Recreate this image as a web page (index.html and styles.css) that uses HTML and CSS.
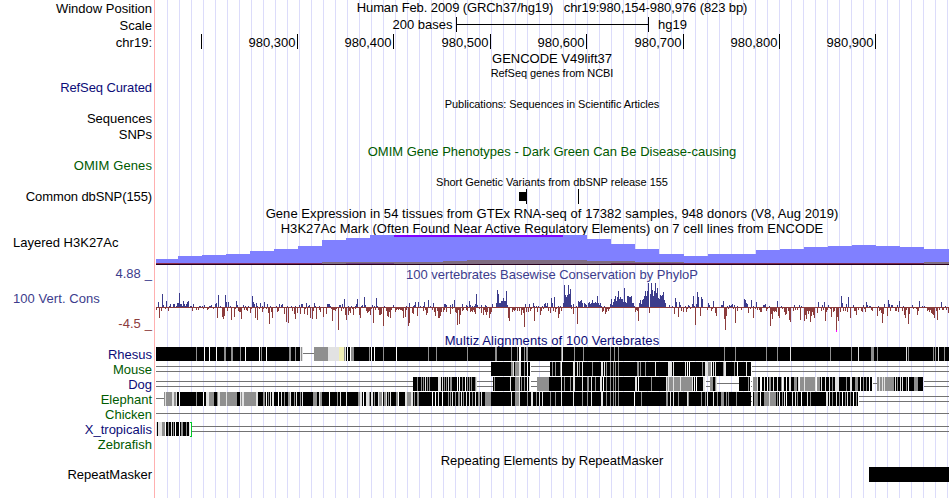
FILE: index.html
```html
<!DOCTYPE html>
<html lang="en">
<head>
<meta charset="utf-8">
<title>chr19:980,154-980,976</title>
<link rel="stylesheet" href="styles.css">
</head>
<body>
<main class="browser">
  <div class="row h17"><div class="label drop">Window Position</div><div class="title tight">Human Feb. 2009 (GRCh37/hg19) &nbsp; chr19:980,154-980,976 (823 bp)</div></div>
  <div class="row h17"><div class="label drop">Scale</div><svg class="track" id="scale" viewBox="155 17 794 17" width="794" height="17"></svg></div>
  <div class="row h17"><div class="label drop">chr19:</div><svg class="track" id="ruler" viewBox="155 34 794 17" width="794" height="17"></svg></div>
  <div class="row h15"><div class="title">GENCODE V49lift37</div></div>
  <div class="row h14"><div class="title small">RefSeq genes from NCBI</div></div>
  <div class="row h17"><div class="label navy tight">RefSeq Curated</div></div>
  <div class="row h14"><div class="title small">Publications: Sequences in Scientific Articles</div></div>
  <div class="row h16"><div class="label">Sequences</div></div>
  <div class="row h17"><div class="label">SNPs</div></div>
  <div class="row h14"><div class="title green">OMIM Gene Phenotypes - Dark Green Can Be Disease-causing</div></div>
  <div class="row h17"><div class="label green loose">OMIM Genes</div></div>
  <div class="row h14"><div class="title small snug">Short Genetic Variants from dbSNP release 155</div></div>
  <div class="row h17"><div class="label tight">Common dbSNP(155)</div><svg class="track" id="snp" viewBox="155 189 794 17" width="794" height="17"></svg></div>
  <div class="row h15"><div class="title wide">Gene Expression in 54 tissues from GTEx RNA-seq of 17382 samples, 948 donors (V8, Aug 2019)</div></div>
  <div class="row h14"><div class="title wide">H3K27Ac Mark (Often Found Near Active Regulatory Elements) on 7 cell lines from ENCODE</div></div>
  <div class="row h31"><div class="label left">Layered H3K27Ac</div><svg class="track" id="histone" viewBox="155 235 794 31" width="794" height="31"></svg></div>
  <div class="row h67">
    <div class="axis">
      <div class="limit blue"><span>4.88</span><span>_</span></div>
      <div class="label left blue wide">100 Vert. Cons</div>
      <div class="limit brown"><span>-4.5</span><span>_</span></div>
    </div>
    <div class="plot">
      <div class="title blue">100 vertebrates Basewise Conservation by PhyloP</div>
      <svg class="track" id="cons" viewBox="155 282 794 51" width="794" height="51"></svg>
    </div>
  </div>
  <div class="row h14"><div class="title navy loose">Multiz Alignments of 100 Vertebrates</div></div>
  <div class="alignments">
    <div class="species">
      <div class="label navy">Rhesus</div>
      <div class="label green">Mouse</div>
      <div class="label navy">Dog</div>
      <div class="label green">Elephant</div>
      <div class="label green">Chicken</div>
      <div class="label navy">X_tropicalis</div>
      <div class="label green">Zebrafish</div>
    </div>
    <svg class="track" id="multiz" viewBox="155 347 794 106" width="794" height="106"></svg>
  </div>
  <div class="row h14"><div class="title">Repeating Elements by RepeatMasker</div></div>
  <div class="row h31"><div class="label">RepeatMasker</div><svg class="track" id="repeats" viewBox="155 467 794 31" width="794" height="31"></svg></div>
</main>
<script src="tracks.js"></script>
</body>
</html>
```
FILE: styles.css
```css
* { box-sizing: border-box; }
body {
  margin: 0;
  background: #fff;
  color: #000;
  font: 13px/15px "Liberation Sans", Arial, sans-serif;
  overflow: hidden;
}
.browser {
  width: 949px;
  height: 498px;
  background:
    linear-gradient(#ffb0b0, #ffb0b0) 154px 0 / 1px 100% no-repeat,
    repeating-linear-gradient(to right, #dcdcfa 0 1px, transparent 1px 12px) 167px 0 / 782px 100% no-repeat;
}
.row, .alignments {
  display: grid;
  grid-template-columns: 155px 794px;
  white-space: nowrap;
}
.h14 { height: 14px; }
.h15 { height: 15px; }
.h16 { height: 16px; }
.h17 { height: 17px; }
.h31 { height: 31px; }
.h67 { height: 67px; }
.alignments { height: 106px; }
.label { grid-column: 1; padding-right: 3px; text-align: right; }
.label.drop { padding-top: 1px; }
.label.left { padding-left: 13px; text-align: left; }
.title { grid-column: 2; text-align: center; }
.small { font-size: 11px; line-height: 14px; letter-spacing: -0.07px; }
.snug { letter-spacing: -0.03px; }
.tight { letter-spacing: -0.1px; }
.wide { letter-spacing: 0.06px; }
.loose { letter-spacing: 0.1px; }
.track { grid-column: 2; display: block; shape-rendering: crispEdges; }
.axis { display: flex; flex-direction: column; gap: 10px; }
.limit { display: flex; justify-content: flex-end; gap: 4px; padding-right: 3px; }
.plot { padding-top: 1px; }
.axis, .species { grid-column: 1; }
.navy { color: #0c0c78; }
.green { color: #005a00; }
.blue { color: #3c3c8c; }
.brown { color: #8c3c3c; }
text { font: 13px "Liberation Sans", Arial, sans-serif; }
```
FILE: tracks.js
```js
const NS = 'http://www.w3.org/2000/svg';
const BLACK = '#000', LINE = '#737373';

function rect(id, x, y, w, h, fill) {
  const r = document.createElementNS(NS, 'rect');
  Object.entries({ x, y, width: w, height: h, fill }).forEach(([k, v]) => r.setAttribute(k, v));
  document.getElementById(id).appendChild(r);
}
function text(id, x, y, str, anchor) {
  const t = document.createElementNS(NS, 'text');
  t.setAttribute('x', x);
  t.setAttribute('y', y);
  t.setAttribute('text-anchor', anchor);
  t.textContent = str;
  document.getElementById(id).appendChild(t);
}

// Scale bar and coordinate ruler
rect('scale', 456, 17, 1, 15, BLACK);
rect('scale', 456, 24, 193, 1, BLACK);
rect('scale', 648, 17, 1, 15, BLACK);
text('scale', 452.5, 29, '200 bases', 'end');
text('scale', 658, 29, 'hg19', 'start');
[201, 297, 393, 490, 586, 683, 779, 875].forEach((x, i) => {
  rect('ruler', x, 34, 1, 15, BLACK);
  if (i) text('ruler', x - 1.5, 47, '980,' + (i + 2) + '00', 'end');
});

// Variants
rect('snp', 519, 192, 7, 9, BLACK);
rect('snp', 526, 189, 1, 15, BLACK);
rect('snp', 578, 189, 1, 15, BLACK);

// Histone mark: step start and top edge
const steps = [[156,259],[178,256],[202,255],[226,254],[250,251],[274,249],[298,246],[322,240],[346,238],
  [370,235],[587,239],[611,244],[635,249],[659,254],[684,256],[708,254],[756,250],[780,249],[804,247],
  [828,246],[852,245],[876,246],[900,247],[924,249],[949,265]];
for (let i = 0; i < steps.length - 1; i++) {
  const [x, y] = steps[i];
  rect('histone', x, y, steps[i + 1][0] - x, 265 - y, '#8080ff');
}
rect('histone', 394, 235, 169, 2, '#8000ff');
[[322,443,262],[443,467,261],[467,587,260],[587,635,261],[635,684,262],[924,949,262]]
  .forEach(([a, b, y]) => rect('histone', a, y, b - a, 264 - y, '#806c80'));
[[156,178,'#8c2c4c'],[178,322,'#802c60'],[346,394,'#70407a'],[611,684,'#70305c'],[684,924,'#782850']]
  .forEach(([a, b, c]) => rect('histone', a, 263, b - a, 1, c));
rect('histone', 156, 264, 793, 1, '#28001c');

// Conservation: "offset:height" pairs relative to each origin
const cons = [
  [155,
   '3:5 7:13 8:2 11:6 14:1 15:3 18:3 19:3 21:1 22:4 23:4 24:14 25:3 26:3 27:1 28:6 29:3 30:1 31:3 32:5 33:6 35:1 36:1 38:3 44:1 45:1 47:1 49:2 54:1 55:1 56:2 60:3 61:4 63:12 65:1 70:12 71:5 73:5 75:1 81:6 82:2 88:2 90:1 93:1 97:11 98:5 99:3 101:4 102:1 105:4 107:1 109:5 112:3 115:1 121:1 124:3 126:2 127:3 132:1 136:1 140:1 144:2 146:3 147:3 151:4 153:1 154:2 159:4 160:1 164:1 172:3 173:3 174:3 175:1 184:2 185:2 187:3 189:8 193:1 196:1 200:1 201:3 202:8 206:1 207:2 209:10 210:2 217:2 219:1 221:9 222:1 229:1 238:2 251:1 254:4 258:1 259:2 260:5 263:5',
   '1:3 2:1 4:11 6:4 9:1 10:2 13:4 17:1 34:1 37:4 41:3 43:3 46:1 48:2 52:3 53:2 58:2 62:11 66:1 67:10 68:12 69:9 72:4 76:13 79:10 80:2 83:4 84:5 85:5 86:12 89:3 91:3 92:4 95:6 96:2 100:11 102:13 104:2 107:5 108:2 111:2 113:6 114:17 116:5 117:11 120:1 122:5 123:4 129:7 131:15 133:16 135:1 137:4 139:7 140:12 142:6 145:7 149:7 150:2 152:8 155:11 157:12 158:4 161:12 164:3 165:5 168:10 171:7 176:2 177:14 178:3 179:3 180:4 181:2 183:23 186:4 188:2 190:8 191:13 193:8 194:4 195:6 197:2 198:8 200:2 204:8 205:11 211:4 212:6 213:5 214:4 215:8 216:2 218:16 220:3 223:3 224:8 225:8 226:7 228:19 231:4 232:9 233:10 234:5 235:11 236:3 240:5 241:3 242:2 243:3 244:2 245:3 246:3 247:4 248:11 250:10 251:3 253:19 254:16 256:1 257:6 258:7 262:9'],
  [420,
   '0:1 3:1 4:5 8:7 10:1 13:4 24:3 25:3 26:2 30:2 32:3 34:7 42:3 46:2 47:1 49:6 50:2 52:1 54:1 55:3 56:13 57:2 61:2 65:2 66:1 72:3 76:4 77:17 78:13 79:4 80:4 81:6 82:6 83:9 84:6 85:6 86:16 87:2 105:3 109:3 113:4 114:1 116:1 118:1 122:1 124:3 125:4 126:1 127:4 131:9 132:4 134:10 138:1 140:1 143:4 144:22 145:12 146:10 147:12 148:22 149:13 150:18 151:2 153:3 156:1 158:6 159:5 160:6 161:7 162:4 164:4 165:3 166:2 168:4 169:5 170:3 171:4 172:7 173:4 174:4 175:5 176:4 177:11 178:4 179:2 180:4 181:1 184:1 190:3 191:8 192:2 193:5 194:8 195:11 196:6 197:10 198:16 199:8 200:10 201:8 202:8 203:5 204:19 205:5 206:4 207:11 208:11 209:10 210:10 211:11 212:4 213:4 214:1 219:4 220:7 221:3 222:7 223:8 224:11 225:16 226:11 227:16 228:24 230:13 231:24 232:17 233:11 234:16 235:24 236:14 237:19 238:9 239:8 240:12 241:11 242:12 243:15 244:7 245:4 249:2 252:1 255:9 256:5 259:5 260:2',
   '3:4 5:3 6:8 7:6 12:3 14:5 15:9 17:4 18:11 19:11 20:9 21:5 23:5 24:3 26:5 30:7 32:2 35:5 36:6 37:18 38:3 39:17 40:8 42:4 43:3 46:3 47:4 50:5 51:4 52:5 53:3 54:5 55:7 59:2 61:6 63:8 64:3 65:5 66:8 67:5 69:11 70:7 71:5 88:11 89:14 92:5 93:3 94:4 95:3 97:4 99:4 101:8 102:3 103:6 104:20 106:5 108:5 110:4 111:2 114:14 117:5 120:8 121:4 123:2 128:4 130:6 133:4 135:5 136:2 138:11 139:7 141:4 151:2 153:7 157:17 182:5 183:4 185:7 186:5 187:2 188:4 189:2 215:5 216:3 217:4 218:14 229:6 248:1 254:7 258:10 261:4 263:5'],
  [685,
   '0:1 3:2 4:1 7:3 8:11 9:1 11:3 12:15 13:10 16:10 17:8 23:4 24:2 28:6 36:2 37:2 38:6 42:1 44:2 45:1 46:2 47:3 49:2 52:1 59:8 60:7 61:4 62:3 66:7 68:1 71:5 78:2 79:2 80:3 84:1 92:6 96:1 109:2 114:2 116:1 133:5 137:2 139:5 143:2 156:11 157:4 161:3 163:10 168:2 178:2 181:5 182:2 184:1 185:1 193:1 199:3 203:7 204:3 206:2 207:2 212:2 214:6 218:1 227:2 234:6 237:1 239:1 256:5 260:1',
   '1:5 2:2 5:2 10:18 15:9 22:3 26:4 27:2 30:6 31:9 34:1 35:1 39:12 40:23 41:9 43:2 48:2 50:16 52:4 54:1 56:3 57:1 63:6 65:2 68:11 70:2 72:3 74:3 75:5 76:5 81:4 82:2 85:19 86:7 87:12 88:4 89:5 90:4 91:5 93:9 94:11 97:2 99:5 100:8 101:7 103:4 104:13 105:15 108:4 110:3 112:3 115:13 117:1 119:14 120:8 121:12 122:4 123:7 124:4 125:15 126:9 127:5 128:8 129:11 132:6 134:1 136:4 138:3 140:14 141:5 142:3 145:2 146:10 148:5 149:4 151:23 152:10 153:14 154:1 155:5 158:4 160:4 162:5 165:11 169:4 170:4 171:8 173:3 176:4 177:5 179:2 180:5 186:3 187:4 192:9 194:4 195:3 196:6 197:16 198:7 200:1 202:9 205:4 209:1 210:4 211:4 213:5 217:4 219:8 220:11 221:3 223:17 224:7 228:2 231:2 232:8 233:4 242:4 243:3 244:5 245:3 246:6 247:7 248:8 249:11 251:4 252:13 254:3 257:3 258:3 261:3 263:6']
];
rect('cons', 156, 307, 793, 1, '#8c3c3c');
cons.forEach(([origin, up, down]) => {
  up.split(' ').forEach(p => {
    const [x, h] = p.split(':').map(Number);
    rect('cons', origin + x, 307 - h, 1, h, '#3c3c8c');
  });
  down.split(' ').forEach(p => {
    const [x, h] = p.split(':').map(Number);
    rect('cons', origin + x, 307, 1, h, '#8c3c3c');
  });
});
rect('cons', 836, 330, 1, 2, '#ff00ff');

// Alignments: code letter, offset and optional width
const tone = { K: '#000', G: '#8f8f8f', L: '#e2e2e2', W: '#fff', Y: '#f0eeb4' };
function single(y, a, b) { rect('multiz', a, y + 6, b - a, 1, LINE); }
function double(y, a, b) {
  rect('multiz', a, y + 4, b - a, 1, LINE);
  rect('multiz', a, y + 9, b - a, 1, LINE);
}
function stripes(y, origin, list) {
  list.split(' ').forEach(s => {
    const [x, w] = s.slice(1).split(':').map(Number);
    rect('multiz', origin + x, y, w || 1, 14, tone[s[0]]);
  });
}

// Rhesus
stripes(347, 155, 'K1:144 G41 W49 W54 W61 G69:2 G76:2 G85 W90 W104 G106 W111 G134:2 G140 L145 G146 L147 G159:14 L173:11 Y184:5 G189 L190 K191 W192 K193:2 W195 G196:3 K199:66 G214 W216 W219 G228 W241');
stripes(347, 420, 'K0:265 G8 G16 G47 G75:2 G91 G97 W99:2 G104 G106:2 G141 L142 G154 G163 G190 G194 G198');
stripes(347, 685, 'K0:264 G39 G50 G81 G92 L105 G145 G166 L173 G186:3 G192 L221 G223 G248 G250 L253 G259');
single(347, 303, 314);

// Mouse
double(362, 156, 491);
stripes(362, 420, 'K71:39 G91:2 L93 G95:4 L99:2 G104 W107 K130:135 G132 G135 G140 W141 L153:2 L157 G159 L162 G172 L181:2 L184 G186 G190 G193 G195 G198 G217:2 G220 G225 L235 L248:4 L253');
double(362, 531, 550);
stripes(362, 685, 'K0:66 L0 W2 W4 G17 L20:3 G23:3 W26 L28 L30 G38 L39:2 G49 W52 L61');
double(362, 752, 949);

// Dog
double(377, 156, 413);
stripes(377, 155, 'K258:7 G262');
stripes(377, 420, 'K0:56 G1 G3 L5 G7 G9 L18:3 L22 G24 G26 L28 G30:2 W37 W39 G42 W45 G47 G49 G51 G55 L56 K73:37 G74 L90 G95:4 L99 G101 G104 W107 L109 G117:12 K129:119 L141 G144 G150 L153:2 L162 G167:2 L171 G175 L180:2 W183 G186 G190 G193 G195 G198 L215:2 W218 G231 L246 G247:18 L248 L253 L260');
double(377, 477, 493);
double(377, 531, 537);
stripes(377, 685, 'G0:7 L7 K8 W9 K10 W11 K12:6 L18:2 G25:6 K28:2 L31 K54:11 G63 G68:5 L72 K73:3 W75 K77:2 L79 K80:4 W82 G84:2 K86:2 L88 K89:3 L92 K93:3 G96 L98 K99:5 W101 L104:2 K106:3 G109:3 K112 L113 G115:4 L119 G120:10 L130 G132:3 K135:5 L136 L140 K141:9 L144 G147 L150:4 K154:33 G161 L165:2 G170:3 W175 G178 G181 W184 G192:17 L194 L197 L199 K209:29 L210 G212 L215 L217 G221 W223 G229:4');
double(377, 706, 710);
single(377, 717, 739);
double(377, 751, 752);
single(377, 873, 877);
double(377, 924, 949);

// Elephant
single(392, 156, 164);
stripes(392, 155, 'G9 L10 G11:6 L17:2 G19:2 L21 K22:29 W24 G41 W48 L51:3 G54:5 K59:4 G62 L63:2 G65:6 L71 G72:10 K82:3 L85 G86 L87:2 G89:12 L101:2 K103:162 G108:2 W111 G113 L115 L117:2 W123 L126 G129 G133:2 L135 G139 L141 G145 L147 G158:4 L164 G165:2 W174 G182 L185 L191 G203:2 L205:2 W208 L211:3 G214 L216:2 G219 L223 G224:3 W227 G229:2 L231 G233 L235 G241:2 W243 L250:2 G252:4 L256:2 G259 G262:2');
stripes(392, 420, 'K0:265 W12 W15 L18 W22 G28 G30 L32 G35 G38:2 L41 G43 L46 L49 G52 L55 G58:2 L61 G65:6 L91 G95:4 L99 G107 L111:2 G116 L119 L122 G130 G135 L141 L153 G162 G167 L171 L181:2 G186 G190 G193 G195 G198 W214 G221 G246:2 L250 L253 G258');
stripes(392, 685, 'K0:66 L2 G3 G16 G20 L22 L28 G32 G36:3 G41 G43 G51 K68:105 G69:4 W75 G79:12 L84 G92 W94 G97 L99 W101 L107 L110 G112 W116 L122 G125 L141:2 L144 G147 L151 G154 W157 G160 L162 G165 W168 G171');
double(392, 751, 752);
double(392, 859, 949);

// Chicken
single(407, 156, 949);

// X_tropicalis
stripes(422, 155, 'L1 K2 L3:4 G7:3 W10 K11:24 G13 L16 G18 W20 W24 G26:2 G31 L34');
double(422, 192, 949);
rect('multiz', 191, 422, 1, 15, '#00c828');
rect('multiz', 190, 422, 1, 1, '#00c828');
rect('multiz', 190, 436, 1, 1, '#00c828');

// Repeats
rect('repeats', 869, 467, 80, 15, BLACK);
```
